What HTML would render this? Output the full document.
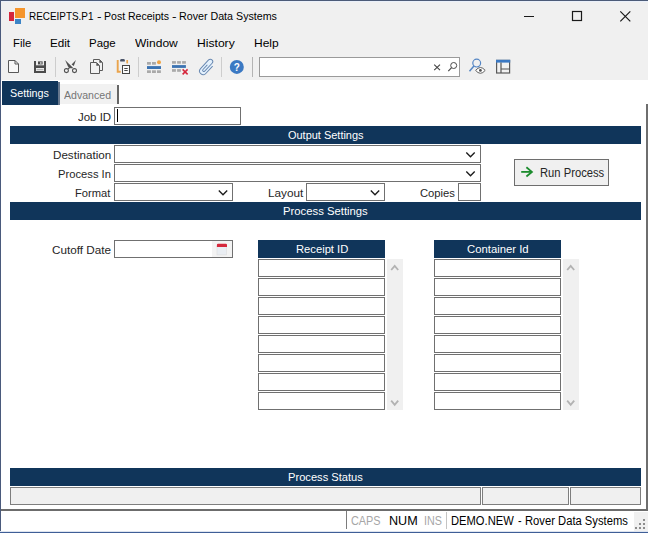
<!DOCTYPE html>
<html><head><meta charset="utf-8"><title>RECEIPTS.P1 - Post Receipts - Rover Data Systems</title>
<style>
html,body{margin:0;padding:0;}
body{width:648px;height:533px;position:relative;overflow:hidden;background:#fff;font-family:"Liberation Sans",sans-serif;}
div,svg{position:absolute;box-sizing:border-box;}
.t{white-space:nowrap;line-height:16px;transform-origin:0 0;}
#chrome{left:0;top:0;width:648px;height:80px;background:#f0f0f0;}
.bar{left:10px;width:631px;height:18px;background:#10355a;}
.inp{background:#fff;border:1px solid #707070;height:18px;}
.hdr{background:#10355a;height:18px;width:127px;top:240px;}
.row{background:#fff;border:1px solid #707070;height:18px;width:127px;}
.sb{background:#f0f0f0;width:16px;top:259px;height:151px;}
.st{background:#f0f0f0;border:1px solid #7e7e7e;height:18px;top:487px;}
</style></head><body>
<div id="chrome"></div>

<!-- tabs -->
<div style="left:2px;top:81px;width:56px;height:24px;background:#10355a;"></div>
<div style="left:58px;top:82px;width:1.6px;height:23px;background:#66778d;"></div>
<div style="left:60px;top:84px;width:57px;height:20px;background:#f1f1f1;"></div>
<div style="left:117.4px;top:85px;width:1.5px;height:19px;background:#666;"></div>

<!-- tab page borders -->
<div style="left:646px;top:104px;width:2px;height:407px;background:#6e6e6e;"></div>
<div style="left:1px;top:509px;width:647px;height:2px;background:#6c6c6c;"></div>

<!-- form -->
<div class="inp" style="left:114px;top:107px;width:127px"></div>
<div style="left:117px;top:109px;width:1px;height:13px;background:#000"></div>
<div class="bar" style="top:126px"></div>
<div class="inp" style="left:114px;top:145px;width:367px"></div>
<div class="inp" style="left:114px;top:164px;width:367px"></div>
<div class="inp" style="left:114px;top:183px;width:119px"></div>
<div class="inp" style="left:306px;top:183px;width:79px"></div>
<div class="inp" style="left:458px;top:183px;width:23px"></div>
<div class="bar" style="top:202px"></div>
<div class="inp" style="left:114px;top:240px;width:119px"></div>
<div style="left:212px;top:241px;width:20px;height:16px;background:#f3f3f3"></div>

<!-- run button -->
<div style="left:514px;top:159px;width:95px;height:27px;background:#f0f0f0;border:1px solid #6e6e6e;"></div>

<!-- grids -->
<div class="hdr" style="left:258px"></div>
<div class="sb" style="left:387px"></div>
<div class="hdr" style="left:434px"></div>
<div class="sb" style="left:563px"></div>
<div class="row" style="left:258px;top:259px"></div><div class="row" style="left:434px;top:259px"></div>
<div class="row" style="left:258px;top:278px"></div><div class="row" style="left:434px;top:278px"></div>
<div class="row" style="left:258px;top:297px"></div><div class="row" style="left:434px;top:297px"></div>
<div class="row" style="left:258px;top:316px"></div><div class="row" style="left:434px;top:316px"></div>
<div class="row" style="left:258px;top:335px"></div><div class="row" style="left:434px;top:335px"></div>
<div class="row" style="left:258px;top:354px"></div><div class="row" style="left:434px;top:354px"></div>
<div class="row" style="left:258px;top:373px"></div><div class="row" style="left:434px;top:373px"></div>
<div class="row" style="left:258px;top:392px"></div><div class="row" style="left:434px;top:392px"></div>

<!-- process status -->
<div class="bar" style="top:468px"></div>
<div class="st" style="left:10px;width:471px"></div>
<div class="st" style="left:482px;width:87px"></div>
<div class="st" style="left:570px;width:71px"></div>

<!-- status bar -->
<div style="left:634px;top:512px;width:14px;height:19px;background:#f0f0f0"></div>
<div style="left:346px;top:511px;width:1px;height:18px;background:#7c7c7c"></div>
<div style="left:446px;top:512px;width:1px;height:17px;background:#c4c4c4"></div>

<!-- search box -->
<div style="left:259px;top:57px;width:201px;height:20px;background:#fff;border:1px solid #9a9a9a;"></div>

<!-- icons overlay -->
<svg style="left:0;top:0" width="648" height="533" viewBox="0 0 648 533">
<!-- app icon -->
<rect x="9" y="12" width="5" height="9" fill="#d5263c"/>
<rect x="15" y="8" width="10" height="10" fill="#f5952c"/>
<rect x="15" y="19" width="6" height="5" fill="#3c84c6"/>
<!-- window controls -->
<path d="M524 16.5H534" stroke="#1a1a1a" stroke-width="1" fill="none"/>
<rect x="572.5" y="11.5" width="9" height="9" stroke="#1a1a1a" stroke-width="1.2" fill="none"/>
<path d="M620.3 11.3L630.3 21.3M630.3 11.3L620.3 21.3" stroke="#1a1a1a" stroke-width="1.2" fill="none"/>
<!-- toolbar separators -->
<path d="M55.5 57V77M138.5 57V77M221.5 57V77" stroke="#cdcdcd" stroke-width="1" fill="none"/>
<path d="M252.5 57V77" stroke="#b4b4b4" stroke-width="1" fill="none"/>
<!-- new -->
<path d="M8.5 60.5H15L18.5 64V72.5H8.5Z" fill="#f8f8f8" stroke="#585858" stroke-width="1"/>
<path d="M15 60.5V64H18.5" fill="none" stroke="#585858" stroke-width="1"/>
<!-- save -->
<rect x="34" y="61" width="12" height="12" fill="#4c4c4c"/>
<rect x="36" y="61" width="8" height="4.3" fill="#ededed"/>
<rect x="38" y="61.4" width="4.6" height="3" fill="#4c4c4c"/>
<rect x="40" y="62.2" width="1.6" height="1.6" fill="#cfcfcf"/>
<rect x="36" y="68" width="8" height="3" fill="#ededed"/>
<rect x="36.6" y="69" width="6.8" height="1.2" fill="#b4b4b4"/>
<!-- cut -->
<path d="M65.1 60L73.5 68.3L70.4 68.3L68.1 66.8Z" fill="#505050"/>
<path d="M75.9 60L73.8 65.9L71.6 64.6Z" fill="#505050"/>
<path d="M70.9 66.7L68 68.7" stroke="#505050" stroke-width="1.2" fill="none"/>
<circle cx="66.4" cy="70.6" r="2" fill="none" stroke="#505050" stroke-width="1.05"/>
<circle cx="74.5" cy="70.6" r="2" fill="none" stroke="#505050" stroke-width="1.05"/>
<!-- copy -->
<path d="M93.5 62.5V59.5H99.5L102.5 62.5V70.5H99.8" fill="#f2f2f2" stroke="#5a5a5a" stroke-width="1"/>
<path d="M99.3 59.5V62.7H102.5Z" fill="#555"/>
<path d="M90.5 62.5H96.5L99.5 65.5V73.5H90.5Z" fill="#f2f2f2" stroke="#5a5a5a" stroke-width="1"/>
<path d="M96.3 62.5V65.7H99.5Z" fill="#555"/>
<!-- paste -->
<path d="M117.7 60V71.7H120.7" fill="none" stroke="#eaa44c" stroke-width="1.9"/>
<path d="M127.2 60V63.4" fill="none" stroke="#eaa44c" stroke-width="1.7"/>
<path d="M120.2 61.4V60.2Q120.2 59 121.4 59H123.6Q124.8 59 124.8 60.2V61.4Z" fill="#4a5468"/>
<rect x="122.5" y="65.5" width="7" height="8" fill="#fafafa" stroke="#444" stroke-width="1"/>
<path d="M124.3 68.5H127.7M124.3 70.5H127.7" stroke="#444" stroke-width="1" fill="none"/>
<!-- insert row -->
<g fill="#a9a9a9">
<rect x="147" y="62" width="3.9" height="2.7"/><rect x="152" y="62" width="3.9" height="2.7"/>
<rect x="147" y="70.3" width="3.9" height="2.7"/><rect x="152" y="70.3" width="3.9" height="2.7"/><rect x="157" y="70.3" width="3.9" height="2.7"/>
</g>
<rect x="147" y="66.1" width="14" height="2.9" fill="#3b73b2"/>
<circle cx="159" cy="62.2" r="2" fill="#efa547"/>
<!-- delete row -->
<g fill="#a9a9a9">
<rect x="172" y="61.1" width="3.9" height="2.6"/><rect x="177.1" y="61.1" width="3.8" height="2.6"/><rect x="182.1" y="61.1" width="3.8" height="2.6"/>
<rect x="172" y="69.1" width="3.9" height="2.7"/><rect x="177.1" y="69.1" width="3.8" height="2.7"/>
</g>
<rect x="172" y="65.1" width="13.9" height="2.8" fill="#3b73b2"/>
<path d="M182.6 69.4L187.6 74.4M187.6 69.4L182.6 74.4" stroke="#d5263c" stroke-width="1.5" fill="none"/>
<!-- attach -->
<g transform="translate(206.7 66.8) rotate(43)">
<path d="M3.9 5.5A3.6 3.6 0 0 1 -3.3 5.5V-6.3A2.4 2.4 0 0 1 1.5 -6.3L3.9 -4.2Z" fill="#e3f0fc"/>
<path d="M3.9 -4.2V5.5A3.6 3.6 0 0 1 -3.3 5.5V-6.3A2.4 2.4 0 0 1 1.5 -6.3V4.5A1.2 1.2 0 0 1 -0.9 4.5V-1.5" fill="none" stroke="#6787b0" stroke-width="0.95" stroke-linecap="round"/>
</g>
<!-- help -->
<circle cx="236.8" cy="66.9" r="7" fill="#3b79c3"/>
<text x="236.9" y="70.6" text-anchor="middle" font-family="Liberation Sans, sans-serif" font-weight="bold" font-size="10" fill="#fff">?</text>
<!-- search box icons -->
<path d="M434.2 64.6L440 70.2M440 64.6L434.2 70.2" stroke="#444" stroke-width="1.1" fill="none"/>
<circle cx="453.7" cy="65.5" r="3" fill="none" stroke="#4a4a4a" stroke-width="1"/>
<path d="M451.6 67.7L448.3 71.1" stroke="#4a4a4a" stroke-width="1.2" fill="none"/>
<!-- find -->
<circle cx="476.7" cy="63.1" r="3.9" fill="none" stroke="#5586c4" stroke-width="1.2"/>
<path d="M473.9 66.1L469.5 71.3" stroke="#5586c4" stroke-width="1.5" fill="none"/>
<path d="M475.6 70.4Q480.4 64.6 485.2 70.4Q480.4 76.2 475.6 70.4Z" fill="#fff" stroke="#606060" stroke-width="1"/>
<circle cx="480.4" cy="70.4" r="1.4" fill="#505050"/>
<!-- panel -->
<rect x="496.6" y="60.4" width="13" height="12.6" fill="#f2f2f2" stroke="#5a5a5a" stroke-width="1.2"/>
<rect x="496" y="59.8" width="14.2" height="2.8" fill="#3b79c3"/>
<path d="M501 62.6V73M501 69H509.6" stroke="#555" stroke-width="1.2" fill="none"/>
<!-- select chevrons -->
<g fill="none" stroke="#1a1a1a" stroke-width="1.35">
<path d="M466.3 152.6L470.5 156.7L474.7 152.6"/>
<path d="M466.3 171.6L470.5 175.7L474.7 171.6"/>
<path d="M218.8 190.6L223 194.7L227.2 190.6"/>
<path d="M370.8 190.6L375 194.7L379.2 190.6"/>
</g>
<!-- calendar -->
<rect x="217" y="246.5" width="9.6" height="8.4" fill="#e9edf2" stroke="#dcdcdc" stroke-width="0.6"/>
<path d="M216.9 247.1V245Q216.9 243.8 218.1 243.8H225.8Q227 243.8 227 245V247.1Z" fill="#d5283c"/>
<!-- run arrow -->
<path d="M521.2 171.9H531.6" stroke="#1c8c2e" stroke-width="1.8" fill="none"/>
<path d="M526.4 167.3L531.9 171.9L526.4 176.5" stroke="#1c8c2e" stroke-width="1.8" fill="none"/>
<!-- scroll chevrons -->
<g fill="none" stroke="#b2b2b2" stroke-width="1.8">
<path d="M391.2 270L394.7 265.9L398.2 270"/>
<path d="M391.2 400.6L394.7 404.8L398.2 400.6"/>
<path d="M567.2 270L570.7 265.9L574.2 270"/>
<path d="M567.2 400.6L570.7 404.8L574.2 400.6"/>
</g>
<!-- grip -->
<g fill="#8c8c8c">
<rect x="643" y="519" width="2" height="2"/>
<rect x="639" y="523" width="2" height="2"/><rect x="643" y="523" width="2" height="2"/>
<rect x="635" y="527" width="2" height="2"/><rect x="639" y="527" width="2" height="2"/><rect x="643" y="527" width="2" height="2"/>
</g>

</svg>

<div class="t" style="left:29.03px;top:8.25px;font-size:11.4px;color:#000;transform:scaleX(0.8699)">RECEIPTS.P1</div>
<div class="t" style="left:97.00px;top:8.25px;font-size:11.4px;color:#000;transform:scaleX(1.2000)">-</div>
<div class="t" style="left:103.58px;top:8.25px;font-size:11.4px;color:#000;transform:scaleX(0.9246)">Post Receipts</div>
<div class="t" style="left:172.00px;top:8.25px;font-size:11.4px;color:#000;transform:scaleX(1.2000)">-</div>
<div class="t" style="left:178.56px;top:8.25px;font-size:11.4px;color:#000;transform:scaleX(0.9379)">Rover Data Systems</div>
<div class="t" style="left:12.64px;top:34.81px;font-size:11.8px;color:#000;transform:scaleX(0.9556)">File</div>
<div class="t" style="left:49.61px;top:34.81px;font-size:11.8px;color:#000;transform:scaleX(0.9895)">Edit</div>
<div class="t" style="left:88.83px;top:34.81px;font-size:11.8px;color:#000;transform:scaleX(0.9692)">Page</div>
<div class="t" style="left:134.70px;top:34.81px;font-size:11.8px;color:#000;transform:scaleX(1.0190)">Window</div>
<div class="t" style="left:196.87px;top:34.81px;font-size:11.8px;color:#000;transform:scaleX(1.0278)">History</div>
<div class="t" style="left:253.98px;top:34.81px;font-size:11.8px;color:#000;transform:scaleX(1.0174)">Help</div>
<div class="t" style="left:10.05px;top:85.08px;font-size:11.3px;color:#fff;transform:scaleX(0.9525)">Settings</div>
<div class="t" style="left:64.30px;top:86.78px;font-size:11.3px;color:#757575;transform:scaleX(0.9360)">Advanced</div>
<div class="t" style="left:78.20px;top:108.68px;font-size:11.3px;color:#262626;transform:scaleX(1.0156)">Job ID</div>
<div class="t" style="left:52.67px;top:147.08px;font-size:11.3px;color:#262626;transform:scaleX(1.0291)">Destination</div>
<div class="t" style="left:57.71px;top:165.88px;font-size:11.3px;color:#262626;transform:scaleX(0.9923)">Process In</div>
<div class="t" style="left:74.71px;top:184.88px;font-size:11.3px;color:#262626;transform:scaleX(0.9886)">Format</div>
<div class="t" style="left:267.56px;top:184.88px;font-size:11.3px;color:#262626;transform:scaleX(1.0424)">Layout</div>
<div class="t" style="left:419.51px;top:184.88px;font-size:11.3px;color:#262626;transform:scaleX(0.9941)">Copies</div>
<div class="t" style="left:51.69px;top:241.68px;font-size:11.6px;color:#262626;transform:scaleX(1.0105)">Cutoff Date</div>
<div class="t" style="left:288.30px;top:126.95px;font-size:11.7px;color:#fff;transform:scaleX(0.9375)">Output Settings</div>
<div class="t" style="left:283.43px;top:202.95px;font-size:11.7px;color:#fff;transform:scaleX(0.9663)">Process Settings</div>
<div class="t" style="left:288.44px;top:468.78px;font-size:11.6px;color:#fff;transform:scaleX(0.9597)">Process Status</div>
<div class="t" style="left:295.94px;top:240.95px;font-size:11.7px;color:#fff;transform:scaleX(0.9585)">Receipt ID</div>
<div class="t" style="left:467.03px;top:240.95px;font-size:11.7px;color:#fff;transform:scaleX(0.9677)">Container Id</div>
<div class="t" style="left:539.77px;top:164.84px;font-size:12px;color:#262626;transform:scaleX(0.9343)">Run Process</div>
<div class="t" style="left:351.09px;top:512.74px;font-size:12px;color:#a6a6a6;transform:scaleX(0.9065)">CAPS</div>
<div class="t" style="left:388.67px;top:512.67px;font-size:12.2px;color:#000;transform:scaleX(1.0346)">NUM</div>
<div class="t" style="left:423.81px;top:512.74px;font-size:12px;color:#a6a6a6;transform:scaleX(0.8947)">INS</div>
<div class="t" style="left:450.77px;top:512.74px;font-size:12px;color:#000;transform:scaleX(0.9318)">DEMO.NEW</div>
<div class="t" style="left:517.60px;top:512.74px;font-size:12px;color:#000;transform:scaleX(0.9000)">-</div>
<div class="t" style="left:525.07px;top:512.74px;font-size:12px;color:#000;transform:scaleX(0.9349)">Rover Data Systems</div>

<!-- window borders -->
<div style="left:0;top:1px;width:648px;height:1px;background:#eaf0fa;"></div>
<div style="left:0;top:0;width:648px;height:1px;background:#4c5b78;"></div>
<div style="left:0;top:0;width:1px;height:533px;background:#4a5a7c;"></div>
<div style="left:0;top:531px;width:648px;height:1px;background:#dde4ef;"></div>
<div style="left:0;top:532px;width:648px;height:1px;background:#3f5e97;"></div>
</body></html>
